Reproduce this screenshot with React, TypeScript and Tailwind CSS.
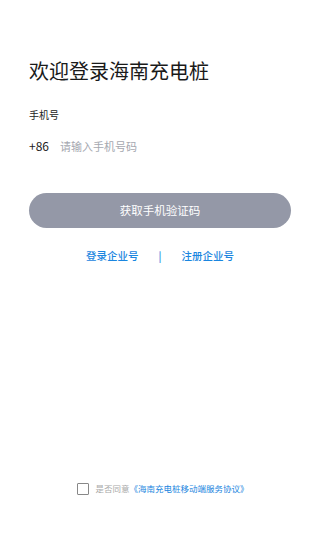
const App = () => {
  return (
    <div
      className="flex h-[554px] w-[320px] flex-col bg-white"
      style={{ fontFamily: '"Noto Sans CJK SC", "Noto Sans", sans-serif' }}
    >
      <div className="px-[29px] pt-[57px]">
        <h1 className="text-[20px] leading-[28px] text-[#1a1a1a]">欢迎登录海南充电桩</h1>
        <div className="mt-[23px] text-[10px] leading-[14px] text-[#222]">手机号</div>
        <div className="mt-[16px] flex items-center text-[12px] leading-[16px]">
          <span className="w-[31px] text-[#222]">+86</span>
          <span className="text-[11px] text-[#a5a8b0]">请输入手机号码</span>
        </div>
        <button className="mt-[39px] flex h-[35px] w-full items-center justify-center rounded-full bg-[#9498a7] text-[11.5px] text-white">
          获取手机验证码
        </button>
        <div className="mt-[20px] flex items-center justify-center text-[10.5px] font-medium leading-[16px] text-[#1a86e0]">
          <span>登录企业号</span>
          <span className="mx-[20px]">|</span>
          <span>注册企业号</span>
        </div>
      </div>
      <div className="mt-auto mb-[59px] flex items-center justify-center pl-[6px]">
        <div className="h-[12px] w-[12px] rounded-[1px] border border-[#888]" />
        <span className="ml-[6px] text-[8.5px] text-[#aaa]">是否同意</span>
        <span className="text-[8.5px] text-[#1a86e0]">《海南充电桩移动端服务协议》</span>
      </div>
    </div>
  );
};

export default App;
